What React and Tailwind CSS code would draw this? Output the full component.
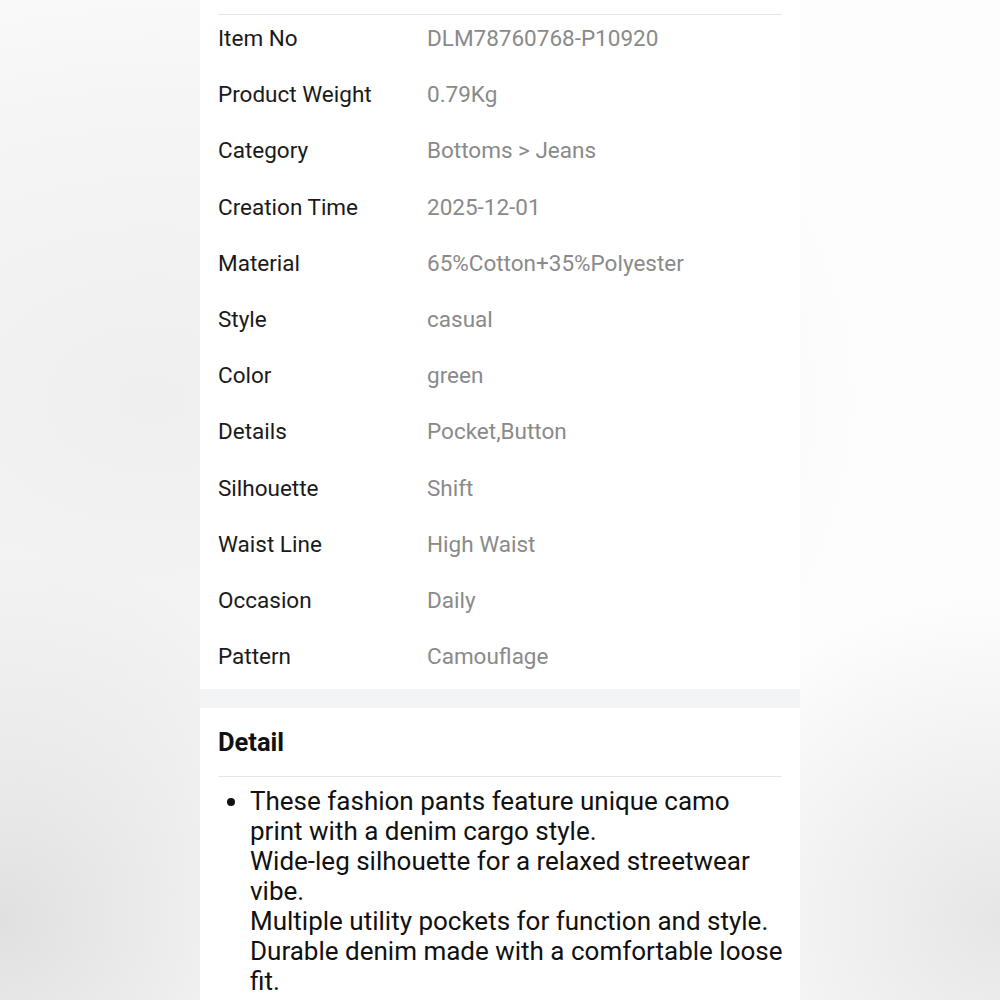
import React from 'react';

const specs = [
  ['Item No', 'DLM78760768-P10920'],
  ['Product Weight', '0.79Kg'],
  ['Category', 'Bottoms > Jeans'],
  ['Creation Time', '2025-12-01'],
  ['Material', '65%Cotton+35%Polyester'],
  ['Style', 'casual'],
  ['Color', 'green'],
  ['Details', 'Pocket,Button'],
  ['Silhouette', 'Shift'],
  ['Waist Line', 'High Waist'],
  ['Occasion', 'Daily'],
  ['Pattern', 'Camouflage'],
];

// lines as they wrap on the page
const detailLines = [
  'These fashion pants feature unique camo',
  'print with a denim cargo style.',
  'Wide-leg silhouette for a relaxed streetwear',
  'vibe.',
  'Multiple utility pockets for function and style.',
  'Durable denim made with a comfortable loose',
  'fit.',
];

export default function App() {
  return (
    <div
      className="h-[1000px] overflow-hidden flex justify-center bg-[radial-gradient(ellipse_at_0%_92%,#e0e0e0,rgba(255,255,255,0)_28%),radial-gradient(ellipse_at_100%_92%,#e6e6e6,rgba(255,255,255,0)_25%),radial-gradient(ellipse_at_15%_40%,#efefef_0%,#f5f5f5_35%,#fdfdfd_60%)] font-['Roboto',sans-serif]"
    >
      <div className="w-[600px] flex flex-col">
        {/* product attributes */}
        <div className="bg-white px-[18px] pt-[14px]">
          <div className="border-t border-[#e6e6e6]">
            {specs.map(([label, value]) => (
              <div key={label} className="flex pt-[11px] pb-[21.2px] text-[22.5px] leading-6">
                <div className="w-[209px] shrink-0 text-[#1a1a1a]">{label}</div>
                <div className="text-[#8a8a8a]">{value}</div>
              </div>
            ))}
          </div>
        </div>

        <div className="h-[19px] bg-[#f3f4f6]" />

        {/* detail section */}
        <div className="flex-1 bg-white px-[18px]">
          <h2 className="pt-[19px] pb-[19px] text-[25.5px] leading-[30px] font-bold text-[#111]">Detail</h2>
          <div className="border-t border-[#e6e6e6] pt-[9px]">
            <ul className="list-disc pl-8 text-[26px] leading-[30px] text-[#111]">
              <li>
                {detailLines.map((line) => (
                  <span key={line} className="block whitespace-nowrap">{line}</span>
                ))}
              </li>
            </ul>
          </div>
        </div>
      </div>
    </div>
  );
}
